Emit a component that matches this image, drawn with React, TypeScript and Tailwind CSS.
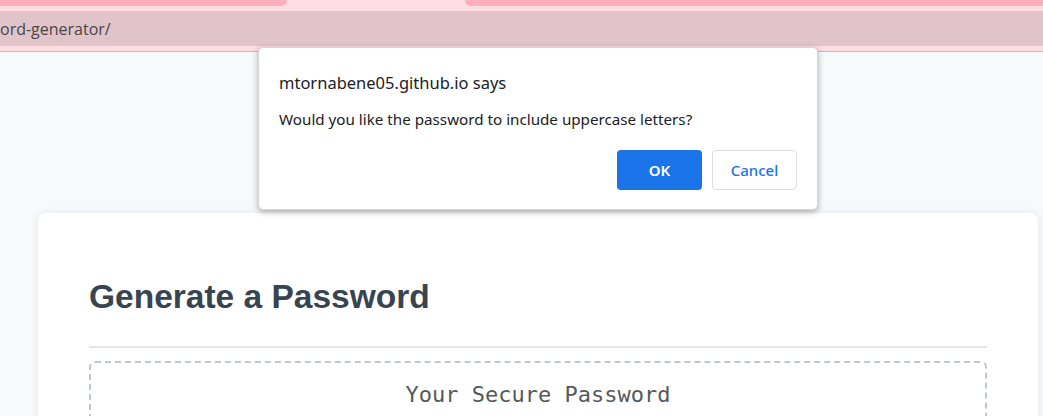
import React from "react"

function BrowserBar() {
  return (
    <div className="flex flex-col">
      <div className="flex h-[6px] bg-[#ffdde3]">
        <div className="w-[287px] bg-[#ffadbb] rounded-br-[8px]" />
        <div className="w-[178px]" />
        <div className="flex-1 bg-[#ffadbb] rounded-bl-[8px]" />
      </div>
      <div className="h-[5px] bg-[#ffdde3]" />
      <div className="h-[35px] bg-[#e1c4c9] flex items-center">
        <span className="text-[16px] text-[#4a4548] leading-none" style={{ fontFamily: '"Open Sans", "Noto Sans", sans-serif' }}>
          ord-generator/
        </span>
      </div>
      <div className="h-[5px] bg-[#ffdde3]" />
      <div className="h-px bg-[#bdbdbd]" />
    </div>
  )
}

function AlertDialog() {
  return (
    <div
      className="absolute left-[258px] top-[47px] w-[560px] h-[163px] bg-white rounded-[5px] border border-[#d5d5d5] shadow-[0_2px_6px_rgba(0,0,0,0.3)] px-[20px] pt-[22px]"
      style={{ fontFamily: '"Noto Sans", "Open Sans", sans-serif' }}
    >
      <p className="text-[16.5px] text-[#202124] leading-[26px]">mtornabene05.github.io says</p>
      <p className="mt-[12px] text-[15.2px] text-[#202124] leading-[22px]">
        Would you like the password to include uppercase letters?
      </p>
      <div className="flex justify-end gap-[10px] mt-[20px]">
        <button className="w-[85px] h-[40px] rounded-[4px] bg-[#1a73e8] text-white text-[15px] font-semibold">OK</button>
        <button className="w-[85px] h-[40px] rounded-[4px] border border-[#dadce0] bg-white text-[#1a73e8] text-[15px] font-medium">
          Cancel
        </button>
      </div>
    </div>
  )
}

export default function App() {
  return (
    <div className="relative w-[1043px] h-[416px] overflow-hidden bg-[#f8f9fa]">
      <BrowserBar />
      <div className="pl-[38px] pt-[161px]">
        <div className="w-[1000px] h-[300px] bg-white rounded-[8px] shadow-[0_0_8px_rgba(0,0,0,0.08)] px-[51px] pt-[63px]">
          <h1
            className="text-[33.5px] font-bold text-[#38444f] leading-[42px] pb-[28px] border-b-2 border-[#e6e6e6]"
            style={{ fontFamily: '"Liberation Sans", Arial, sans-serif' }}
          >
            Generate a Password
          </h1>
          <div className="mt-[13px] h-[120px] border-2 border-dashed border-[#c0c6ce] rounded-[6px] flex justify-center pt-[18px]">
            <span className="text-[22px] text-[#55595c] leading-[28px]" style={{ fontFamily: '"DejaVu Sans Mono", "Liberation Mono", monospace' }}>
              Your Secure Password
            </span>
          </div>
        </div>
      </div>
      <AlertDialog />
    </div>
  )
}
